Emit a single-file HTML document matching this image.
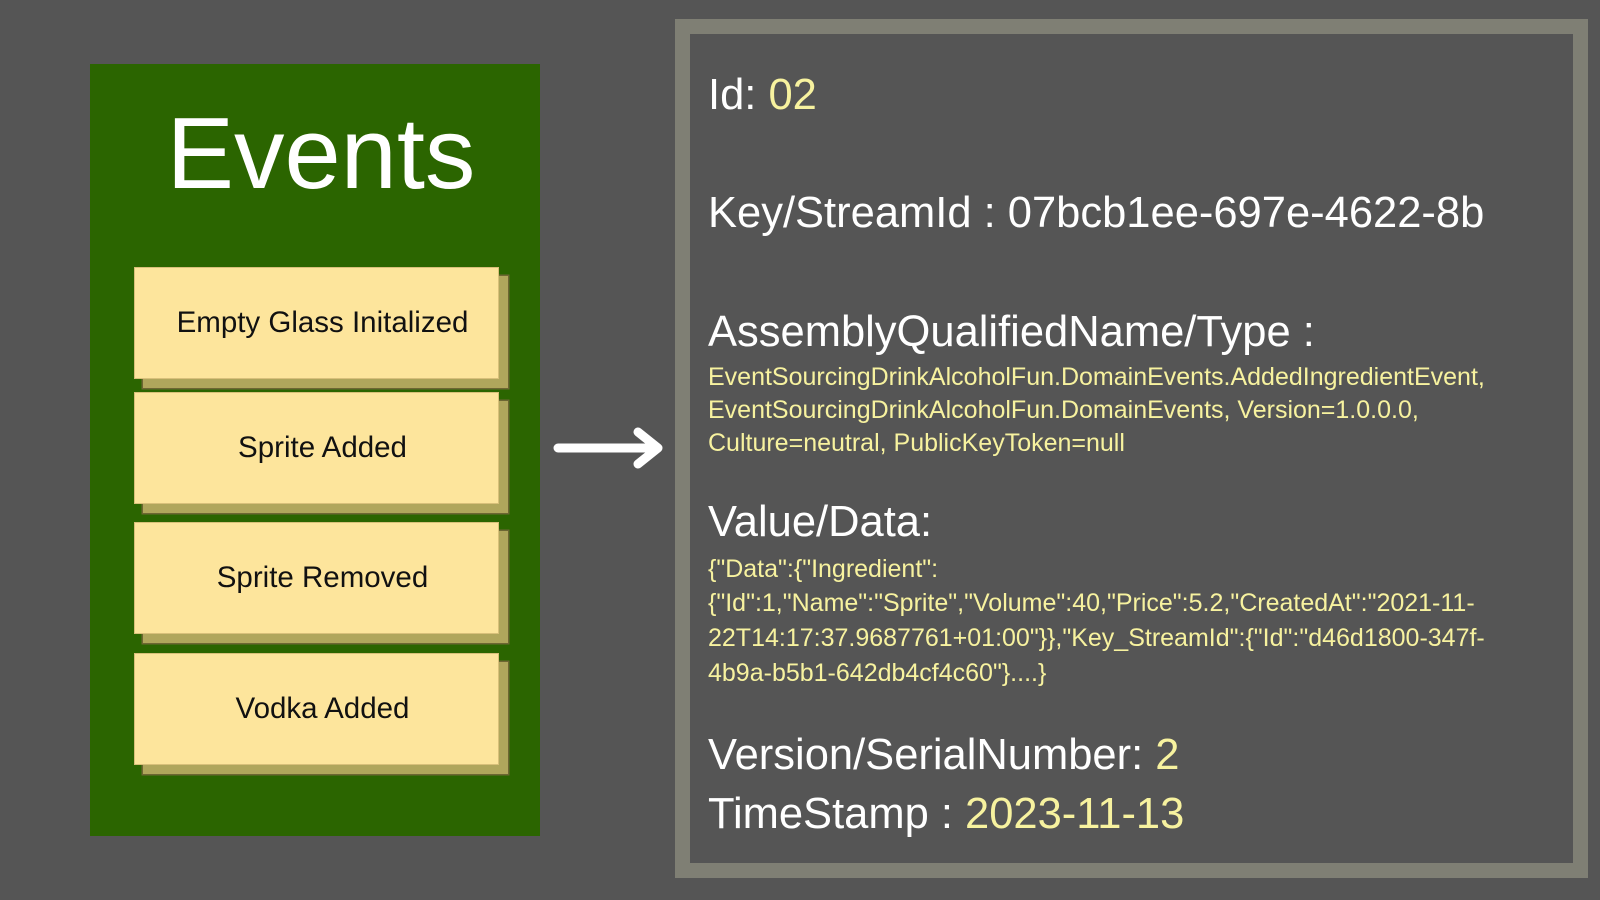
<!DOCTYPE html>
<html><head><meta charset="utf-8"><style>
html,body{margin:0;padding:0}
body{width:1600px;height:900px;background:#555555;position:relative;overflow:hidden;font-family:"Liberation Sans",sans-serif}
.green{position:absolute;left:90px;top:64px;width:450px;height:772px;background:#2b6500}
.title{position:absolute;left:96px;width:450px;top:104px;text-align:center;color:#fff;font-size:101px;line-height:1}
.box{position:absolute;left:134px;width:365px;height:112px}
.box .sh{position:absolute;left:9px;top:9px;width:365px;height:112px;background:#b0a65c;box-shadow:0 0 0 1.5px #6d6633}
.box .f{position:absolute;left:0;top:0;width:351px;padding-left:12px;height:110px;background:#fde59c;border:1px solid #d8c07a;display:flex;align-items:center;justify-content:center;font-size:29.5px;color:#111}
.frame{position:absolute;left:675px;top:19px;width:883px;height:829px;border:15px solid #7f7f74;background:#555555}
.t{position:absolute;left:708px;color:#fff;line-height:1;white-space:nowrap;transform-origin:left top}
.big{font-size:43.5px}
.sm{font-size:25px;color:#f7f29f}
.y{color:#f7f29f}
</style></head><body>
<div class="green"></div>
<div class="title">Events</div>
<div class="box" style="top:267px"><div class="sh"></div><div class="f">Empty Glass Initalized</div></div>
<div class="box" style="top:392px"><div class="sh"></div><div class="f">Sprite Added</div></div>
<div class="box" style="top:522px"><div class="sh"></div><div class="f">Sprite Removed</div></div>
<div class="box" style="top:653px"><div class="sh"></div><div class="f">Vodka Added</div></div>
<svg style="position:absolute;left:550px;top:425px" width="120" height="50"><path d="M8 23 H108 M88 7 L108 23 L88 39" stroke="#fff" stroke-width="9" stroke-linecap="round" stroke-linejoin="round" fill="none"/></svg>
<div class="frame"></div>
<div class="t big" style="top:74px">Id: <span class="y">02</span></div>
<div class="t big" style="top:192px">Key/StreamId : 07bcb1ee-697e-4622-8b</div>
<div class="t big" style="top:311px">AssemblyQualifiedName/Type :</div>
<div class="t sm" style="top:365px">EventSourcingDrinkAlcoholFun.DomainEvents.AddedIngredientEvent,</div>
<div class="t sm" style="top:398px">EventSourcingDrinkAlcoholFun.DomainEvents, Version=1.0.0.0,</div>
<div class="t sm" style="top:431px">Culture=neutral, PublicKeyToken=null</div>
<div class="t big" style="top:501px">Value/Data:</div>
<div class="t sm" style="top:557px">{"Data":{"Ingredient":</div>
<div class="t sm" style="top:591px">{"Id":1,"Name":"Sprite","Volume":40,"Price":5.2,"CreatedAt":"2021-11-</div>
<div class="t sm" style="top:626px">22T14:17:37.9687761+01:00"}},"Key_StreamId":{"Id":"d46d1800-347f-</div>
<div class="t sm" style="top:661px">4b9a-b5b1-642db4cf4c60"}....}</div>
<div class="t big" style="top:734px">Version/SerialNumber: <span class="y">2</span></div>
<div class="t big" style="top:793px">TimeStamp : <span class="y">2023-11-13</span></div>
</body></html>
